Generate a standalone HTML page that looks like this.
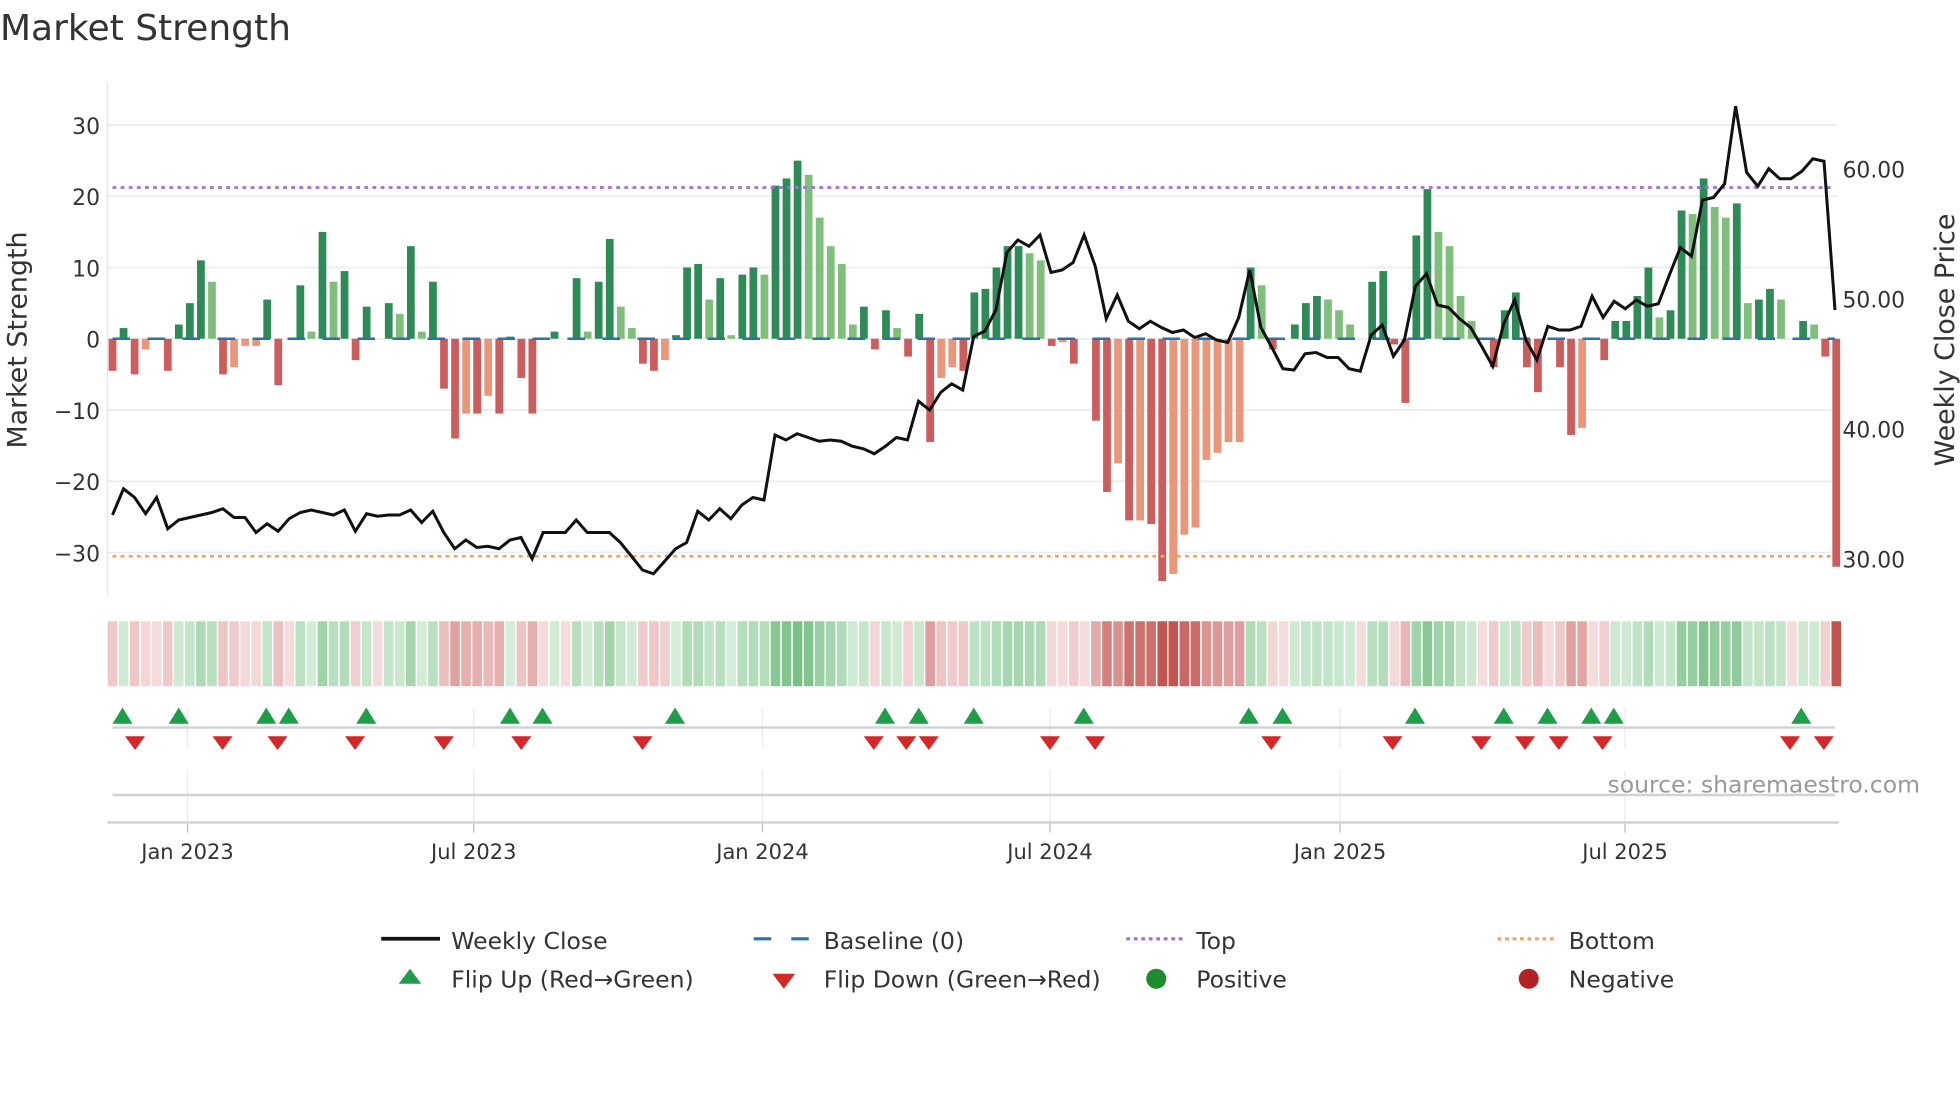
<!DOCTYPE html>
<html><head><meta charset="utf-8"><style>
html,body{margin:0;padding:0;background:#fff;width:1960px;height:1102px;overflow:hidden}
svg{display:block}
text{font-family:"DejaVu Sans","Liberation Sans",sans-serif;fill:#333}
</style></head><body>
<svg id="s" width="1960" height="1102" viewBox="0 0 1568 881.6" xmlns="http://www.w3.org/2000/svg">
<text x="0" y="32" font-size="28.8">Market Strength</text>
<g id="grid" stroke="#eceef1" stroke-width="1.5"></g>
<line x1="86" y1="65" x2="86" y2="478" stroke="#e6e6e6" stroke-width="1"/>
<g id="bars"></g>
<line x1="90" y1="271" x2="1468" y2="271" stroke="#2a72a8" stroke-width="2" stroke-dasharray="14 14"/>
<line x1="90" y1="150" x2="1468" y2="150" stroke="#9b6fe0" stroke-width="2.2" stroke-dasharray="3 3.5"/>
<line x1="90" y1="445" x2="1468" y2="445" stroke="#f5a25d" stroke-width="2.2" stroke-dasharray="3 3.5"/>
<polyline id="price" fill="none" stroke="#111" stroke-width="2.4" stroke-linejoin="miter"/>
<g font-size="17.5" text-anchor="end">
<text x="80" y="107">30</text><text x="80" y="164">20</text><text x="80" y="221">10</text><text x="80" y="278">0</text>
<text x="80" y="335">−10</text><text x="80" y="392">−20</text><text x="80" y="449">−30</text>
</g>
<g font-size="17.5">
<text x="1474" y="142">60.00</text><text x="1474" y="246">50.00</text><text x="1474" y="350">40.00</text><text x="1474" y="454">30.00</text>
</g>
<text transform="translate(21,272) rotate(-90)" font-size="21.5" text-anchor="middle">Market Strength</text>
<text transform="translate(1563,272) rotate(-90)" font-size="21.5" text-anchor="middle">Weekly Close Price</text>
<g id="heat"></g>
<g id="vgrid" stroke="#e8eaee" stroke-width="1"></g>
<line x1="90" y1="582" x2="1468" y2="582" stroke="#cfd3d8" stroke-width="2"/>
<line x1="90" y1="636" x2="1468" y2="636" stroke="#cfd3d8" stroke-width="2"/>
<line x1="86" y1="658" x2="1471" y2="658" stroke="#cfd3d8" stroke-width="2"/>
<g id="marks"></g>
<text x="1536" y="634" font-size="18.8" text-anchor="end" fill="#999" style="fill:#999">source: sharemaestro.com</text>
<g font-size="16.8" text-anchor="middle" id="xt">
<text x="150" y="687">Jan 2023</text><text x="379" y="687">Jul 2023</text><text x="610" y="687">Jan 2024</text>
<text x="840" y="687">Jul 2024</text><text x="1072" y="687">Jan 2025</text><text x="1300" y="687">Jul 2025</text>
</g>
<g font-size="18.8">
<line x1="305" y1="751" x2="352" y2="751" stroke="#111" stroke-width="3"/>
<text x="361" y="759">Weekly Close</text>
<line x1="603" y1="751" x2="648" y2="751" stroke="#2a72a8" stroke-width="2.5" stroke-dasharray="14 16"/>
<text x="659" y="759">Baseline (0)</text>
<line x1="901" y1="751" x2="946" y2="751" stroke="#9b6fe0" stroke-width="2.5" stroke-dasharray="3 3"/>
<text x="957" y="759">Top</text>
<line x1="1198" y1="751" x2="1243" y2="751" stroke="#f5a25d" stroke-width="2.5" stroke-dasharray="3 3"/>
<text x="1255" y="759">Bottom</text>
<polygon points="319,787 337,787 328,775" fill="#1e9e48"/>
<text x="361" y="790">Flip Up (Red→Green)</text>
<polygon points="618,779 636,779 627,791" fill="#d62728"/>
<text x="659" y="790">Flip Down (Green→Red)</text>
<circle cx="925" cy="783" r="8" fill="#1e8c2e"/>
<text x="957" y="790">Positive</text>
<circle cx="1223" cy="783" r="8" fill="#b22222"/>
<text x="1255" y="790">Negative</text>
</g>
</svg>
<script>
var NS="http://www.w3.org/2000/svg";
function el(t,a,p){var e=document.createElementNS(NS,t);for(var k in a)e.setAttribute(k,a[k]);document.getElementById(p).appendChild(e);return e;}
[30,20,10,0,-10,-20,-30].forEach(function(v){var y=271-5.7*v;el('line',{x1:86,x2:1470,y1:y,y2:y},'grid');});
var d="R-4.5 G1.5 R-5 r-1.5 Z0 R-4.5 G2 G5 G11 g8 R-5 r-4 r-1 r-1 G5.5 R-6.5 Z0 G7.5 g1 G15 g8 G9.5 R-3 G4.5 Z0 G5 g3.5 G13 g1 G8 R-7 R-14 r-10.5 R-10.5 r-8 R-10.5 G0.3 R-5.5 R-10.5 Z0 G1 Z0 G8.5 g1 G8 G14 g4.5 g1.5 R-3.5 R-4.5 r-3 G0.5 G10 G10.5 g5.5 G8.5 g0.5 G9 G10 g9 G21.5 G22.5 G25 g23 g17 g13 g10.5 g2 G4.5 R-1.5 G4 g1.5 R-2.5 G3.5 R-14.5 r-5.5 r-4 R-4.5 G6.5 G7 G10 G13 G13 g12 g11 R-1 r-0.5 R-3.5 Z0 R-11.5 R-21.5 r-17.5 R-25.5 r-25.5 R-26 R-34 r-33 r-27.5 r-26.5 r-17 r-16 r-14.5 r-14.5 G10 g7.5 R-1.5 Z0 G2 G5 G6 g5.5 g4 g2 Z0 G8 G9.5 R-0.8 R-9 G14.5 G21 g15 g13 g6 g2.5 Z0 R-4 G4 G6.5 R-4 R-7.5 Z0 R-4 R-13.5 r-12.5 Z0 R-3 G2.5 G2.5 G6 G10 g3 G4 G18 g17.5 G22.5 g18.5 g17 G19 g5 G5.5 G7 g5.5 Z0 G2.5 g2 R-2.5 R-32".split(" ");
var col={G:"#2e8b57",g:"#7fbf7b",R:"#cd5c5c",r:"#e9967a",Z:"#fff"};
var n=d.length,step=(1469-90)/(n-1);
function mix(a,b,t){return "rgb("+[0,1,2].map(function(i){return Math.round(a[i]+(b[i]-a[i])*t)}).join(",")+")";}
d.forEach(function(s,i){var c=s[0],v=parseFloat(s.slice(1)),x=90+step*i;
 if(v!==0){var y0=271,y1=271-5.7*v;el('rect',{x:x-3.1,y:Math.min(y0,y1),width:6.2,height:Math.abs(y1-y0),fill:col[c]},'bars');}
 var t=Math.min(1,Math.abs(v)/32),f;
 if(v>0||c=='G'||c=='g')f=mix([220,241,223],[96,180,112],0.05+0.95*t);else f=mix([245,220,220],[196,84,80],0.0+1.0*t);
 el('rect',{x:x-step/2+0.6,y:497,width:step-1.2,height:52,fill:f},'heat');
});
[150,379,610,840,1072,1300].forEach(function(x){el('line',{x1:x,x2:x,y1:567,y2:598},'vgrid');el('line',{x1:x,x2:x,y1:616,y2:658},'vgrid');el('line',{x1:x,x2:x,y1:658,y2:666,stroke:'#bbb'},'vgrid');});
[98,143,213,231,293,408,434,540,708,735,779,867,999,1026,1132,1203,1238,1273,1291,1441].forEach(function(x){el('polygon',{points:(x-8)+",579 "+(x+8)+",579 "+x+",566",fill:"#1e9e48"},'marks');});
[108,178,222,284,355,417,514,699,725,743,840,876,1017,1114,1185,1220,1247,1282,1432,1459].forEach(function(x){el('polygon',{points:(x-8)+",589 "+(x+8)+",589 "+x+",600",fill:"#d62728"},'marks');});
var p=[412,391,398,411,398,423,416,414,412,410,407,414,414,426,419,425,415,410,408,410,412,408,425,411,413,412,412,408,418,409,426,439,432,438,437,439,432,430,447,426,426,426,416,426,426,426,434,445,456,459,449,439,434,409,416,407,415,404,398,400,348,352,347,350,353,352,353,357,359,363,357,350,352,321,328,314,307,312,269,265,248,202,192,197,188,218,216,210,188,213,255,236,257,263,257,262,266,264,270,267,272,274,254,216,262,278,295,296,283,282,286,286,295,297,268,260,285,272,229,219,244,246,255,262,277,293,259,240,272,288,261,264,264,261,237,254,241,247,240,245,243,220,198,205,160,158,147,85,138,149,135,143,143,137,127,129,248];
var st=(1468-90)/(p.length-1);
document.getElementById('price').setAttribute('points',p.map(function(y,i){return (90+st*i).toFixed(1)+","+y}).join(" "));
</script>
</body></html>
